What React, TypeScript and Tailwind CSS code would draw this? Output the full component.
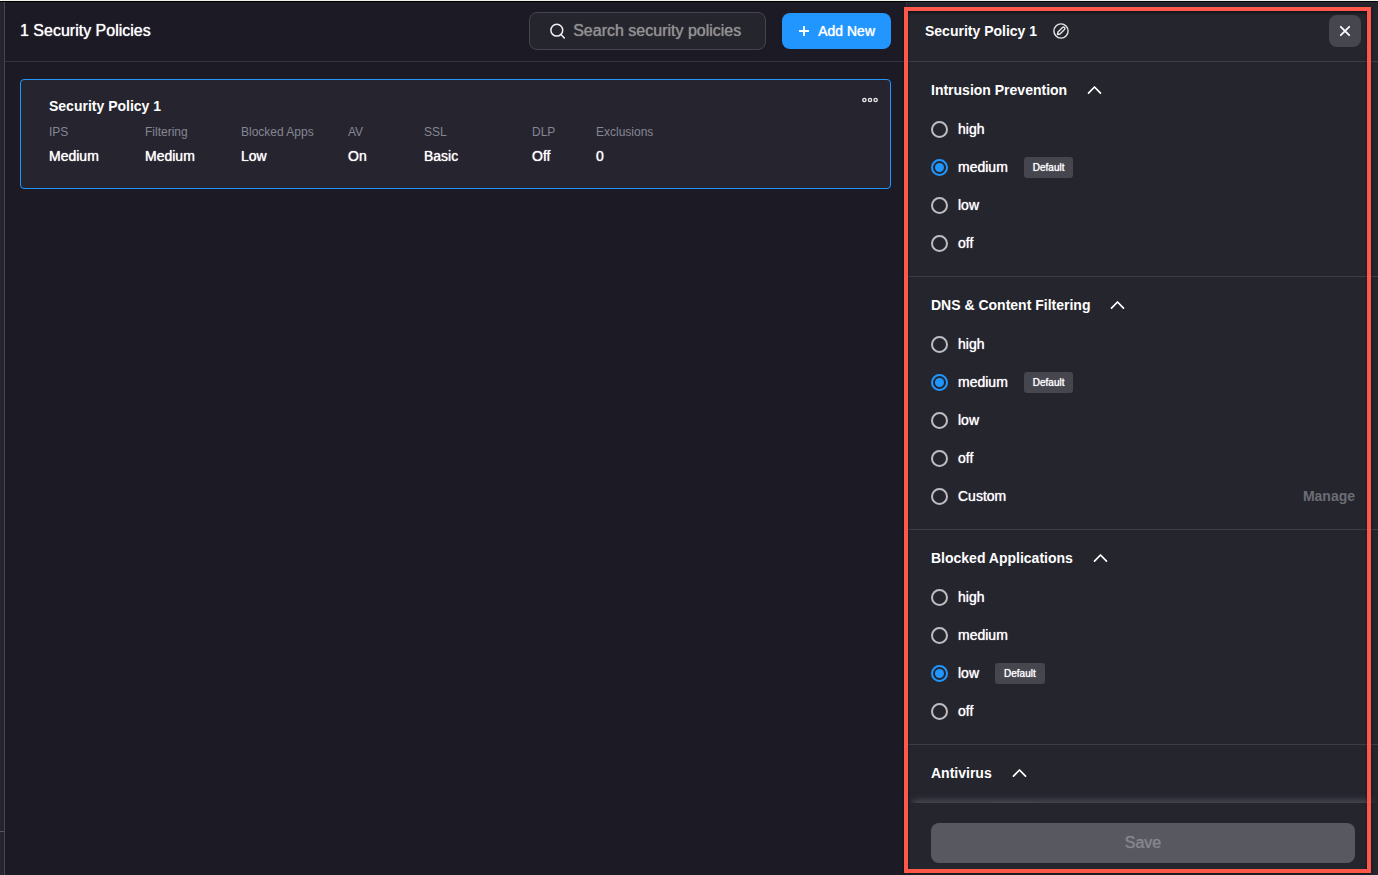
import { useState } from "react";

type Option = { value: string; manage?: boolean };
type Section = { id: string; title: string; options: Option[]; fallback: string };

const sections: Section[] = [
  {
    id: "ips",
    title: "Intrusion Prevention",
    fallback: "medium",
    options: [{ value: "high" }, { value: "medium" }, { value: "low" }, { value: "off" }],
  },
  {
    id: "filtering",
    title: "DNS & Content Filtering",
    fallback: "medium",
    options: [
      { value: "high" },
      { value: "medium" },
      { value: "low" },
      { value: "off" },
      { value: "Custom", manage: true },
    ],
  },
  {
    id: "apps",
    title: "Blocked Applications",
    fallback: "low",
    options: [{ value: "high" }, { value: "medium" }, { value: "low" }, { value: "off" }],
  },
  {
    id: "antivirus",
    title: "Antivirus",
    fallback: "on",
    options: [{ value: "on" }],
  },
];

const summary = [
  ["IPS", "Medium"],
  ["Filtering", "Medium"],
  ["Blocked Apps", "Low"],
  ["AV", "On"],
  ["SSL", "Basic"],
  ["DLP", "Off"],
  ["Exclusions", "0"],
];

function SearchIcon() {
  return (
    <svg width="15" height="16" viewBox="0 0 15 16" fill="none" stroke="#f1f1f3" strokeWidth="1.5" strokeLinecap="round" aria-hidden="true">
      <circle cx="6.8" cy="7.2" r="5.9" />
      <path d="M11 11.6 14.3 15" />
    </svg>
  );
}

function EditIcon() {
  return (
    <svg width="16" height="16" viewBox="0 0 16 16" fill="none" stroke="#e6e6e8" strokeWidth="1.4" strokeLinejoin="round" aria-hidden="true">
      <circle cx="8" cy="8" r="7.1" />
      <path d="M4.5 11.5 5 9 9.5 4.5a1.4 1.4 0 0 1 2 2L7 11Z" />
    </svg>
  );
}

function PolicySection({ section }: { section: Section }) {
  const [value, setValue] = useState(section.fallback);
  const [open, setOpen] = useState(true);
  return (
    <section className="border-b border-[#3c3d46] pt-4 pr-[23px] pb-[14px] pl-6">
      <h3 className="mb-2">
        <button type="button" aria-expanded={open} onClick={() => setOpen(!open)} className="flex h-6 items-center gap-5 text-sm font-bold">
          {section.title}
          <svg className={open ? "" : "rotate-180"} width="15" height="10" viewBox="0 0 15 10" fill="none" stroke="currentColor" strokeWidth="1.7" strokeLinecap="round" strokeLinejoin="round" aria-hidden="true">
            <path d="M1.5 8.2 7.5 2l6 6.2" />
          </svg>
        </button>
      </h3>
      {open &&
        section.options.map((option) => (
          <div key={option.value} className="flex h-[38px] items-center justify-between">
            <label className="flex items-center text-sm">
              <input
                type="radio"
                name={section.id}
                checked={value === option.value}
                onChange={() => setValue(option.value)}
                className="mr-[10px] size-[17px] appearance-none rounded-full border-2 border-[#bdbdc1] bg-clip-content p-[2px] checked:border-[#2196ff] checked:bg-[#2196ff]"
              />
              <span className="[text-shadow:0_0_1px_#ffffff]">{option.value}</span>
              {option.value === section.fallback && (
                <span className="ml-4 flex h-[21px] items-center rounded-[3px] bg-[#45464e] px-[9px] pt-[2px] text-[10px] [text-shadow:0_0_1px_#ffffff]">
                  Default
                </span>
              )}
            </label>
            {option.manage && (
              <button type="button" disabled className="text-sm font-bold text-[#6c6d75]">
                Manage
              </button>
            )}
          </div>
        ))}
    </section>
  );
}

export default function App() {
  return (
    <div className="relative flex h-screen flex-col overflow-hidden border-t border-[#eef0ea] bg-[#1c1a24] font-['Liberation_Sans',Arial,sans-serif] text-white">
      <div className="flex min-h-0 flex-1 border-t border-black">
        <div className="flex w-[5px] shrink-0 flex-col justify-end border-r border-[#44454d] bg-[#24252d]">
          <div className="h-11 border-t border-[#55565e]" />
        </div>

        <main className="min-w-0 flex-1">
          <header className="flex h-[60px] items-center border-b border-[#33343e] px-[15px] pb-[2px]">
            <h1 className="flex-1 text-base [text-shadow:0_0_1px_#ffffff]">1 Security Policies</h1>
            <label className="mr-4 flex h-[38px] w-[237px] items-center gap-2 rounded-lg border border-[#44454d] bg-[#25252e] pr-4 pl-5">
              <SearchIcon />
              <input
                type="text"
                aria-label="Search security policies"
                placeholder="Search security policies"
                className="min-w-0 flex-1 bg-transparent text-base outline-none placeholder:text-[#919191] placeholder:[text-shadow:0_0_1px_#919191]"
              />
            </label>
            <button type="button" className="flex h-9 items-center gap-2 rounded-lg bg-[#2196ff] px-4 text-sm [text-shadow:0_0_1px_#ffffff]">
              <svg width="12" height="12" viewBox="0 0 12 12" stroke="currentColor" strokeWidth="1.8" aria-hidden="true">
                <path d="M6 1v10M1 6h10" />
              </svg>
              Add New
            </button>
          </header>

          <article className="mx-[15px] mt-[17px] rounded-[4px] border border-[#2196ff] bg-[#26252f] pt-4 pr-3 pb-[22px] pl-7">
            <div className="flex items-start justify-between">
              <h2 className="text-sm font-bold">Security Policy 1</h2>
              <button type="button" aria-label="Policy actions">
                <svg width="16" height="8" viewBox="0 0 16 8" fill="none" stroke="#e6e6e8" strokeWidth="1.4" aria-hidden="true">
                  <circle cx="2.4" cy="4" r="1.6" />
                  <circle cx="8" cy="4" r="1.6" />
                  <circle cx="13.6" cy="4" r="1.6" />
                </svg>
              </button>
            </div>
            <dl className="mt-2 grid grid-cols-[96px_96px_107px_76px_108px_64px_1fr]">
              {summary.map(([label, value]) => (
                <div key={label}>
                  <dt className="text-xs text-[#858693]">{label}</dt>
                  <dd className="mt-[6px] text-sm [text-shadow:0_0_1px_#ffffff]">{value}</dd>
                </div>
              ))}
            </dl>
          </article>
        </main>

        <aside className="flex w-[472px] shrink-0 flex-col border-l border-[#33343e] bg-[#25252e]">
          <header className="flex h-[60px] shrink-0 items-center border-b border-[#3c3d46] pr-[17px] pb-[2px] pl-[18px]">
            <h2 className="text-sm font-bold">Security Policy 1</h2>
            <button type="button" aria-label="Rename policy" className="ml-4">
              <EditIcon />
            </button>
            <button type="button" aria-label="Close" className="ml-auto flex size-8 items-center justify-center rounded-lg bg-[#45464e]">
              <svg width="12" height="12" viewBox="0 0 12 12" stroke="currentColor" strokeWidth="1.8" strokeLinecap="round" aria-hidden="true">
                <path d="m1.8 1.8 8.4 8.4M10.2 1.8l-8.4 8.4" />
              </svg>
            </button>
          </header>
          <div className="min-h-0 flex-1 overflow-y-auto [scrollbar-width:none]">
            {sections.map((section) => (
              <PolicySection key={section.id} section={section} />
            ))}
          </div>
          <footer className="relative bg-[#25252e] pt-5 pr-[23px] pb-3 pl-6 shadow-[0_-9px_6px_-6px_#484954]">
            <button type="button" disabled className="h-10 w-full rounded-lg bg-[#575860] text-base text-[#85868c] [text-shadow:0_0_1px_#85868c]">
              Save
            </button>
          </footer>
        </aside>
      </div>
      <div className="pointer-events-none absolute top-[6px] right-[7px] bottom-[2px] w-[467px] border-4 border-[#ff574a] shadow-[0_1px_3px_#00000080,inset_0_2px_3px_#00000080]" />
    </div>
  );
}
